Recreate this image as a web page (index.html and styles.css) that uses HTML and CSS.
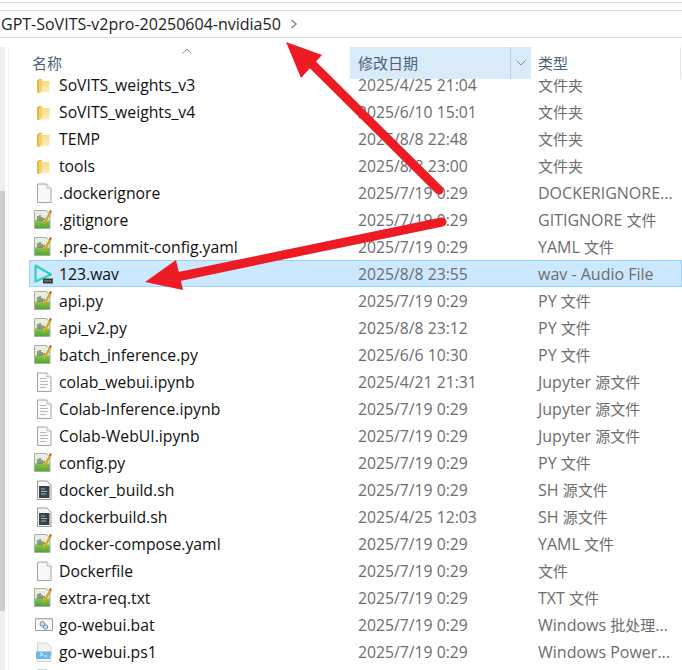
FILE: index.html
```html
<!DOCTYPE html>
<html lang="zh">
<head>
<meta charset="utf-8">
<title>GPT-SoVITS-v2pro-20250604-nvidia50</title>
<link rel="stylesheet" href="styles.css">
</head>
<body>
<svg class="defs" width="0" height="0">
  <defs>
    <linearGradient id="fold" x1="0" y1="0" x2="0" y2="1"><stop offset="0" stop-color="#fbdc80"/><stop offset="1" stop-color="#f9efc4"/></linearGradient>
    <linearGradient id="pyg" x1="0" y1="0" x2="0" y2="1"><stop offset="0" stop-color="#eef0e8"/><stop offset=".5" stop-color="#dfe8cf"/><stop offset=".62" stop-color="#7fc04a"/><stop offset="1" stop-color="#4ea62c"/></linearGradient>
    <symbol id="i-folder" viewBox="0 0 20 20"><path d="M4 5.500l2-1.500h3V16L6 18 4 17.500z" fill="#e3b93f"/><path d="M6 6h10.500V17.500H6z" fill="url(#fold)"/><path d="M6 6 9 4V15.500L6 18z" fill="#f5d163"/></symbol>
    <symbol id="i-py" viewBox="0 0 20 20"><path d="M1.500 .5H13l4 3V18.500H1.500z" fill="url(#pyg)" stroke="#a9aea2"/><path d="M5 11V6M7 11V5M9 11V7M11 10V8" stroke="#3c4a38" stroke-width="1"/><path d="M11 14 17.500 2" stroke="#d8a21e" stroke-width="2.200"/><path d="M17 2.500 18 .5" stroke="#c8443c" stroke-width="2"/></symbol>
    <symbol id="i-doc" viewBox="0 0 20 20"><path d="M4.500 1H14l4 4V19.500H4.500z" fill="#f7f7f7" stroke="#a3a3a3"/><path d="M14 1V5H18" fill="#fff" stroke="#b5b5b5"/></symbol>
    <symbol id="i-note" viewBox="0 0 20 20"><path d="M4.500 1H14l4 4V19.500H4.500z" fill="#fbfbfb" stroke="#a3a3a3"/><path d="M14 1V5H18" fill="#fff" stroke="#b5b5b5"/><path d="M7 6.500h6M7 9.500h8M7 12.500h8M7 15.500h6" stroke="#b9b9b9"/></symbol>
    <symbol id="i-sh" viewBox="0 0 20 20"><path d="M4.500 1H14l4 4V19.500H4.500z" fill="#f7f7f7" stroke="#9a9a9a"/><path d="M6 6h10.500v12H6z" fill="#33444c"/><path d="M8 9h4M8 11.500h6M8 14h5" stroke="#a9b6bb"/></symbol>
    <symbol id="i-wav" viewBox="0 0 20 20"><path d="M2.500 1.500 18 10.500 2.500 17.500z" fill="none" stroke="#2fd0bb" stroke-width="2.200" stroke-linejoin="round"/><rect x="10" y="14.500" width="11" height="5" fill="#3a3a3a"/><path d="M11.500 17h8" stroke="#c8c8c8" stroke-dasharray="1.500 1"/></symbol>
    <symbol id="i-bat" viewBox="0 0 20 20"><path d="M2.500 3.500H19.500V15.500H2.500z" fill="#fafafa" stroke="#9f9f9f"/><path d="M3 4.200H19" stroke="#cfcfcf"/><circle cx="9.500" cy="9" r="2.500" fill="#d5d5d5" stroke="#8d8d8d"/><circle cx="12.500" cy="12" r="2.200" fill="#cfe0ec" stroke="#6f8ca3"/></symbol>
    <symbol id="i-ps" viewBox="0 0 20 20"><path d="M4.500 1H14l4 4V19.500H4.500z" fill="#f2f2f2" stroke="#d5d5d5"/><path d="M3 9.500h15.500L17 17H3z" fill="#6db6e6"/><path d="M7 11l3 1.500-3 1.500M11 14h3" stroke="#e8f6ff" fill="none"/></symbol>
  </defs>
</svg>
<div class="window">
  <div class="toolbar-strip"></div>
  <div class="address">
    <span class="crumb">GPT-SoVITS-v2pro-20250604-nvidia50</span>
    <svg class="chev" width="8" height="12" viewBox="0 0 8 12"><path d="M1.500 2 6 6 1.500 10" fill="none" stroke="#8a8a8a" stroke-width="1.600"/></svg>
  </div>
  <div class="pane">
    <div class="track"><div class="thumb"></div></div>
    <div class="content">
      <div class="head">
        <div class="h-name">名称<svg class="caret" width="10" height="6" viewBox="0 0 10 6"><path d="M.5 5.500 5 1l4.500 4.500" fill="none" stroke="#8a8a8a"/></svg></div>
        <div class="h-date"><span class="h-date-label">修改日期</span><span class="h-date-drop"><svg width="10" height="6" viewBox="0 0 10 6"><path d="M.5.500 5 5 9.500.500" fill="none" stroke="#7d8c9c"/></svg></span></div>
        <div class="h-type">类型</div>
      </div>
      <div class="list">
        <div class="row"><div class="name"><svg class="ico"><use href="#i-folder"/></svg>SoVITS_weights_v3</div><div class="date">2025/4/25 21:04</div><div class="type"><span class="zh">文件夹</span></div></div>
        <div class="row"><div class="name"><svg class="ico"><use href="#i-folder"/></svg>SoVITS_weights_v4</div><div class="date">2025/6/10 15:01</div><div class="type"><span class="zh">文件夹</span></div></div>
        <div class="row"><div class="name"><svg class="ico"><use href="#i-folder"/></svg>TEMP</div><div class="date">2025/8/8 22:48</div><div class="type"><span class="zh">文件夹</span></div></div>
        <div class="row"><div class="name"><svg class="ico"><use href="#i-folder"/></svg>tools</div><div class="date">2025/8/8 23:00</div><div class="type"><span class="zh">文件夹</span></div></div>
        <div class="row"><div class="name"><svg class="ico"><use href="#i-doc"/></svg>.dockerignore</div><div class="date">2025/7/19 0:29</div><div class="type">DOCKERIGNORE...</div></div>
        <div class="row"><div class="name"><svg class="ico"><use href="#i-py"/></svg>.gitignore</div><div class="date">2025/7/19 0:29</div><div class="type">GITIGNORE <span class="zh">文件</span></div></div>
        <div class="row"><div class="name"><svg class="ico"><use href="#i-py"/></svg>.pre-commit-config.yaml</div><div class="date">2025/7/19 0:29</div><div class="type">YAML <span class="zh">文件</span></div></div>
        <div class="row selected"><div class="name"><svg class="ico"><use href="#i-wav"/></svg>123.wav</div><div class="date">2025/8/8 23:55</div><div class="type">wav - Audio File</div></div>
        <div class="row"><div class="name"><svg class="ico"><use href="#i-py"/></svg>api.py</div><div class="date">2025/7/19 0:29</div><div class="type">PY <span class="zh">文件</span></div></div>
        <div class="row"><div class="name"><svg class="ico"><use href="#i-py"/></svg>api_v2.py</div><div class="date">2025/8/8 23:12</div><div class="type">PY <span class="zh">文件</span></div></div>
        <div class="row"><div class="name"><svg class="ico"><use href="#i-py"/></svg>batch_inference.py</div><div class="date">2025/6/6 10:30</div><div class="type">PY <span class="zh">文件</span></div></div>
        <div class="row"><div class="name"><svg class="ico"><use href="#i-note"/></svg>colab_webui.ipynb</div><div class="date">2025/4/21 21:31</div><div class="type">Jupyter <span class="zh">源文件</span></div></div>
        <div class="row"><div class="name"><svg class="ico"><use href="#i-note"/></svg>Colab-Inference.ipynb</div><div class="date">2025/7/19 0:29</div><div class="type">Jupyter <span class="zh">源文件</span></div></div>
        <div class="row"><div class="name"><svg class="ico"><use href="#i-note"/></svg>Colab-WebUI.ipynb</div><div class="date">2025/7/19 0:29</div><div class="type">Jupyter <span class="zh">源文件</span></div></div>
        <div class="row"><div class="name"><svg class="ico"><use href="#i-py"/></svg>config.py</div><div class="date">2025/7/19 0:29</div><div class="type">PY <span class="zh">文件</span></div></div>
        <div class="row"><div class="name"><svg class="ico"><use href="#i-sh"/></svg>docker_build.sh</div><div class="date">2025/7/19 0:29</div><div class="type">SH <span class="zh">源文件</span></div></div>
        <div class="row"><div class="name"><svg class="ico"><use href="#i-sh"/></svg>dockerbuild.sh</div><div class="date">2025/4/25 12:03</div><div class="type">SH <span class="zh">源文件</span></div></div>
        <div class="row"><div class="name"><svg class="ico"><use href="#i-py"/></svg>docker-compose.yaml</div><div class="date">2025/7/19 0:29</div><div class="type">YAML <span class="zh">文件</span></div></div>
        <div class="row"><div class="name"><svg class="ico"><use href="#i-doc"/></svg>Dockerfile</div><div class="date">2025/7/19 0:29</div><div class="type"><span class="zh">文件</span></div></div>
        <div class="row"><div class="name"><svg class="ico"><use href="#i-py"/></svg>extra-req.txt</div><div class="date">2025/7/19 0:29</div><div class="type">TXT <span class="zh">文件</span></div></div>
        <div class="row"><div class="name"><svg class="ico"><use href="#i-bat"/></svg>go-webui.bat</div><div class="date">2025/7/19 0:29</div><div class="type">Windows <span class="zh">批处理</span>...</div></div>
        <div class="row"><div class="name"><svg class="ico"><use href="#i-ps"/></svg>go-webui.ps1</div><div class="date">2025/7/19 0:29</div><div class="type">Windows Power...</div></div>
        <div class="row"><div class="name"><svg class="ico"><use href="#i-note"/></svg></div></div>
      </div>
    </div>
  </div>
  <svg class="arrows" width="682" height="670" viewBox="0 0 682 670">
    <path d="M439 190 310 62" stroke="#ed1c24" stroke-width="9" stroke-linecap="round" fill="none"/>
    <path d="M286 42 322 55 301 78z" fill="#ed1c24"/>
    <path d="M442 222 172 278" stroke="#ed1c24" stroke-width="9" stroke-linecap="round" fill="none"/>
    <path d="M145 282 176 260 183 290z" fill="#ed1c24"/>
  </svg>
</div>
</body>
</html>
```
FILE: styles.css
```css
* { box-sizing: border-box; }
html, body { margin: 0; padding: 0; background: #fff; }
.defs { position: absolute; }
.window {
  position: relative;
  width: 682px;
  height: 670px;
  overflow: hidden;
  font-family: "Open Sans", "Noto Sans CJK SC", sans-serif;
  font-size: 16px;
  color: #111;
}
.toolbar-strip {
  height: 9px;
  margin-top: 2px;
  border-top: 1px solid #dcdcdc;
  border-bottom: 1px solid #dcdcdc;
}
.address {
  height: 27px;
  border-bottom: 1px solid #dcdcdc;
  display: flex;
  align-items: center;
  padding-left: 1px;
  font-size: 16px;
  color: #222;
  gap: 9px;
}
.chev { flex: none; }
.pane { display: flex; height: 632px; padding-top: 9px; }
.track { width: 5px; flex: none; background: #f0f0f0; }
.thumb { margin-top: 144px; height: 420px; background: #cdcdcd; }
.content {
  flex: 1;
  margin-left: 3px;
  padding-left: 20px;
  border-left: 1px solid #f0f0f0;
  min-width: 0;
}
.head {
  position: relative;
  z-index: 1;
  display: grid;
  grid-template-columns: 321px 181px 1fr;
  height: 32px;
  background: #fff;
  color: #4c607a;
  font-size: 15px;
  line-height: 32px;
  border-right: 1px solid #e5e5e5;
  margin-right: 1px;
}
.h-name { padding-left: 3px; position: relative; }
.caret { position: absolute; left: 153px; top: 1px; }
.h-date { display: flex; background: #d9ebf9; }
.h-date-label { flex: 1; padding-left: 8px; border-right: 1px solid #b8cfe2; }
.h-date-drop { width: 20px; display: flex; align-items: center; justify-content: center; }
.h-type { padding-left: 7px; }
.list { margin-top: -8px; }
.row {
  display: grid;
  grid-template-columns: 321px 181px 1fr;
  height: 27px;
  line-height: 27px;
  white-space: nowrap;
}
.row.selected {
  background: #cce8ff;
  box-shadow: inset 0 0 0 1px #99d1ff;
}
.name {
  display: flex;
  align-items: center;
  padding: 1px 0 0 4px;
  gap: 6px;
  color: #111;
  font-size: 15.750px;
}
.ico { width: 20px; height: 20px; flex: none; overflow: visible; margin-top: -1px; }
.date { padding: 1px 0 0 8px; color: #6d6d6d; font-size: 15.750px; }
.type { padding: 1px 0 0 7px; color: #6d6d6d; }
.zh { font-size: 15px; }
.arrows { position: absolute; left: 0; top: 0; z-index: 2; pointer-events: none; }
```
